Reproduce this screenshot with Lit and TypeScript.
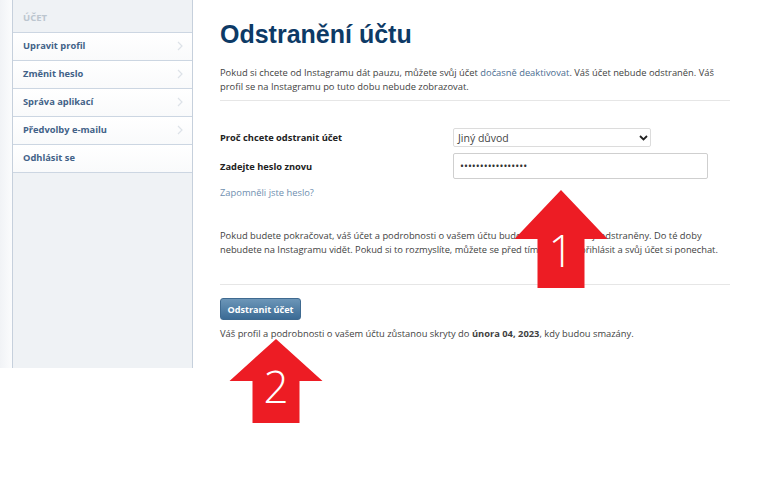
import { LitElement, html, css, svg } from "lit";
import { customElement } from "lit/decorators.js";

const menu = [
  { label: "Upravit profil", arrow: true },
  { label: "Změnit heslo", arrow: true },
  { label: "Správa aplikací", arrow: true },
  { label: "Předvolby e-mailu", arrow: true },
  { label: "Odhlásit se", arrow: false },
];

@customElement("app-root")
export class AppRoot extends LitElement {
  private arrow(cls: string, digit: string, wing: number, height: number) {
    return html`
      <div class="arrow ${cls}">
        <svg width="94" height=${height} viewBox="0 0 94 ${height}">
          ${svg`<path d="M47 0L93.5 ${wing}H70.5V${height}H23.5V${wing}H0.5Z" fill="#ed1c24"></path>`}
        </svg>
        <span class="digit">${digit}</span>
      </div>
    `;
  }

  render() {
    return html`
      <div class="page">
        <aside class="side">
          <div class="side-title">ÚČET</div>
          ${menu.map(
            (m) => html`
              <a class="item">
                <span>${m.label}</span>
                ${m.arrow
                  ? html`<svg class="chev" width="6" height="10" viewBox="0 0 6 10">
                      <path d="M1 1l4 4-4 4" fill="none" stroke="#dde2e8" stroke-width="1.2"></path>
                    </svg>`
                  : ""}
              </a>
            `
          )}
        </aside>
        <main class="main">
          <h1>Odstranění účtu</h1>
          <p class="intro">
            Pokud si chcete od Instagramu dát pauzu, můžete svůj účet
            <a class="link">dočasně deaktivovat</a>. Váš účet nebude odstraněn. Váš<br />profil se na
            Instagramu po tuto dobu nebude zobrazovat.
          </p>
          <hr class="rule first" />
          <div class="form">
            <label>Proč chcete odstranit účet</label>
            <div class="fake-select">
              <span>Jiný důvod</span>
              <svg width="9" height="6" viewBox="0 0 9 6">
                <path d="M1 1l3.5 3.5L8 1" fill="none" stroke="#222" stroke-width="1.8"></path>
              </svg>
            </div>
            <label>Zadejte heslo znovu</label>
            <div class="fake-input">•••••••••••••••••</div>
          </div>
          <a class="forgot">Zapomněli jste heslo?</a>
          <p class="warn">
            Pokud budete pokračovat, váš účet a podrobnosti o vašem účtu budou skryty a později odstraněny. Do té doby<br />
            <span class="tight">nebudete na Instagramu vidět. Pokud si to rozmyslíte, můžete se před tímto datem přihlásit a svůj účet si ponechat.</span>
          </p>
          <hr class="rule second" />
          <button class="del">Odstranit účet</button>
          <p class="note">
            Váš profil a podrobnosti o vašem účtu zůstanou skryty do <b>února 04, 2023</b>, kdy budou smazány.
          </p>
        </main>
      </div>
      ${this.arrow("a1", "1", 49, 98)} ${this.arrow("a2", "2", 42, 84)}
    `;
  }

  static styles = css`
    :host {
      display: block;
      position: relative;
      width: 780px;
      height: 481px;
      overflow: hidden;
      background: #fff;
      font-family: "Open Sans", sans-serif;
      font-size: 9.35px;
      color: #3f3f3f;
    }

    .page {
      display: flex;
      height: 368px;
      padding-left: 12px;
      background: linear-gradient(90deg, #f1f3f6 0, #fbfcfd 12px, #fff 12px);
    }

    .side {
      width: 181px;
      flex: none;
      box-sizing: border-box;
      background: #eff2f5;
      border-left: 1px solid #c6d0dc;
      border-right: 1px solid #c6d0dc;
    }

    .side-title {
      height: 33px;
      box-sizing: border-box;
      padding: 12px 0 0 10px;
      font-size: 9.5px;
      line-height: 12px;
      font-weight: 700;
      color: #bcc6cf;
      border-bottom: 1px solid #ccd6e2;
    }

    .item {
      display: flex;
      align-items: center;
      justify-content: space-between;
      height: 28px;
      box-sizing: border-box;
      padding: 0 9px 2px 10px;
      font-size: 9.3px;
      font-weight: 700;
      color: #426288;
      background: linear-gradient(#fff, #f9fafb);
      border-bottom: 1px solid #ccd6e2;
    }

    .main {
      width: 510px;
      margin-left: 27px;
      white-space: nowrap;
    }

    h1 {
      margin: 0;
      padding-top: 19px;
      font-family: "Liberation Sans", sans-serif;
      font-size: 25px;
      line-height: 30px;
      font-weight: 700;
      color: #0d3a66;
    }

    p {
      margin: 0;
      line-height: 14px;
    }

    .intro {
      margin-top: 17px;
    }

    .link {
      color: #4b6d91;
    }

    .tight {
      letter-spacing: -0.035px;
    }

    .rule {
      border: 0;
      border-top: 1px solid #e6e6e6;
      margin: 0;
    }

    .first {
      margin-top: 6px;
    }

    .form {
      display: grid;
      grid-template-columns: 233px 255px;
      grid-template-rows: 19px 26px;
      row-gap: 6px;
      align-items: center;
      margin-top: 27px;
    }

    label {
      font-size: 9.3px;
      font-weight: 700;
      color: #222;
    }

    .fake-select {
      display: flex;
      align-items: center;
      justify-content: space-between;
      width: 198px;
      height: 19px;
      box-sizing: border-box;
      padding: 0 2px 0 4px;
      border: 1px solid #dcdcdc;
      border-radius: 2px;
      font-size: 10.5px;
      color: #444;
    }

    .fake-input {
      height: 26px;
      box-sizing: border-box;
      padding: 0 6px;
      border: 1px solid #cfcfcf;
      border-radius: 2px;
      line-height: 24px;
      font-size: 10.5px;
      color: #333;
    }

    .forgot {
      display: block;
      margin-top: 7px;
      line-height: 14px;
      color: #6f8fb0;
    }

    .warn {
      margin-top: 29px;
    }

    .second {
      margin-top: 27px;
    }

    .del {
      display: block;
      width: 81px;
      height: 22px;
      margin-top: 13px;
      padding: 0;
      border: 1px solid #3f6a90;
      border-radius: 3px;
      background: linear-gradient(#6c96b8, #3b6b95);
      color: #fff;
      font: 700 9.1px "Open Sans", sans-serif;
    }

    .note {
      margin-top: 7px;
    }

    .arrow {
      position: absolute;
      width: 94px;
    }

    .arrow svg {
      display: block;
    }

    .a1 {
      left: 514px;
      top: 190px;
    }

    .a2 {
      left: 229px;
      top: 339px;
    }

    .digit {
      position: absolute;
      left: 0;
      right: 0;
      text-align: center;
      font-family: "Open Sans", sans-serif;
      font-weight: 300;
      font-size: 44px;
      line-height: 50px;
      color: #fff;
    }

    .a1 .digit {
      top: 35px;
    }

    .a2 .digit {
      top: 22px;
    }
  `;
}
